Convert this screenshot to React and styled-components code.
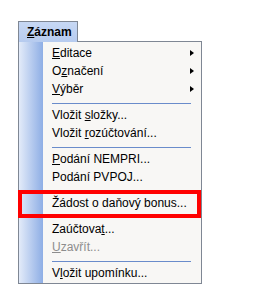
import React from 'react';
import styled, { createGlobalStyle } from 'styled-components';

const Global = createGlobalStyle`
  html, body {
    margin: 0;
    padding: 0;
    background: #ffffff;
  }
  body {
    font-family: "Liberation Sans", Arial, sans-serif;
    font-size: 12px;
    color: #000;
  }
`

const Page = styled.div`
  width: 255px;
  height: 296px;
  padding: 21px 0 0 18px;
  box-sizing: border-box;
`

const MenuHeader = styled.div`
  position: relative;
  z-index: 1;
  width: 60px;
  height: 21px;
  box-sizing: border-box;
  margin-bottom: -1px;
  padding-left: 8px;
  display: flex;
  align-items: center;
  border: 1px solid #7f8794;
  border-bottom: none;
  background: linear-gradient(to bottom, #c7d8f4, #b6cbef);
  font-weight: bold;
  font-size: 12px;
`

const Menu = styled.div`
  width: 184px;
  box-sizing: border-box;
  border: 1px solid #7f8794;
  padding: 2px 0 1px;
  background: linear-gradient(to right, #e3ebf9 0, #8eaee5 24px, #f8f7f5 24px);
`

const Item = styled.div`
  position: relative;
  height: 18px;
  display: flex;
  align-items: center;
  padding-left: 33px;
  padding-right: 6px;
  color: ${p => (p.disabled ? '#8d8d8d' : '#000')};
  white-space: nowrap;
`

const Label = styled.span`
  flex: 1;
`

const Key = styled.u`
  text-decoration: underline;
  text-underline-offset: 1px;
`

const Arrow = styled.span`
  width: 0;
  height: 0;
  border-top: 3.5px solid transparent;
  border-bottom: 3.5px solid transparent;
  border-left: 4px solid #000;
  margin-right: 1px;
`

const Separator = styled.div`
  height: 8px;
  display: flex;
  align-items: flex-start;
  padding: 5px 10px 0 33px;
  box-sizing: border-box;
  &::after {
    content: '';
    flex: 1;
    height: 1px;
    background: #6a8ccb;
  }
`

const Highlight = styled.div`
  position: absolute;
  top: -4px;
  bottom: -6px;
  left: -1px;
  right: 0;
  border: 4px solid #ff0000;
  pointer-events: none;
`

function Entry({ before = '', k = '', after = '', sub, disabled, marked }) {
  return (
    <Item disabled={disabled}>
      <Label>
        {before}
        {k && <Key>{k}</Key>}
        {after}
      </Label>
      {sub && <Arrow />}
      {marked && <Highlight />}
    </Item>
  )
}

export default function App() {
  return (
    <Page>
      <Global />
      <MenuHeader>
        <Key>Z</Key>áznam
      </MenuHeader>
      <Menu>
        <Entry k="E" after="ditace" sub />
        <Entry before="O" k="z" after="načení" sub />
        <Entry k="V" after="ýběr" sub />
        <Separator />
        <Entry before="Vložit " k="s" after="ložky..." />
        <Entry before="Vložit " k="r" after="ozúčtování..." />
        <Separator />
        <Entry k="P" after="odání NEMPRI..." />
        <Entry before="Podání PVPOJ..." />
        <Separator />
        <Entry before="Žádost o daňový bonus..." marked />
        <Separator />
        <Entry before="Zaúčtova" k="t" after="..." />
        <Entry k="U" after="zavřít..." disabled />
        <Separator />
        <Entry before="V" k="l" after="ožit upomínku..." />
      </Menu>
    </Page>
  )
}
